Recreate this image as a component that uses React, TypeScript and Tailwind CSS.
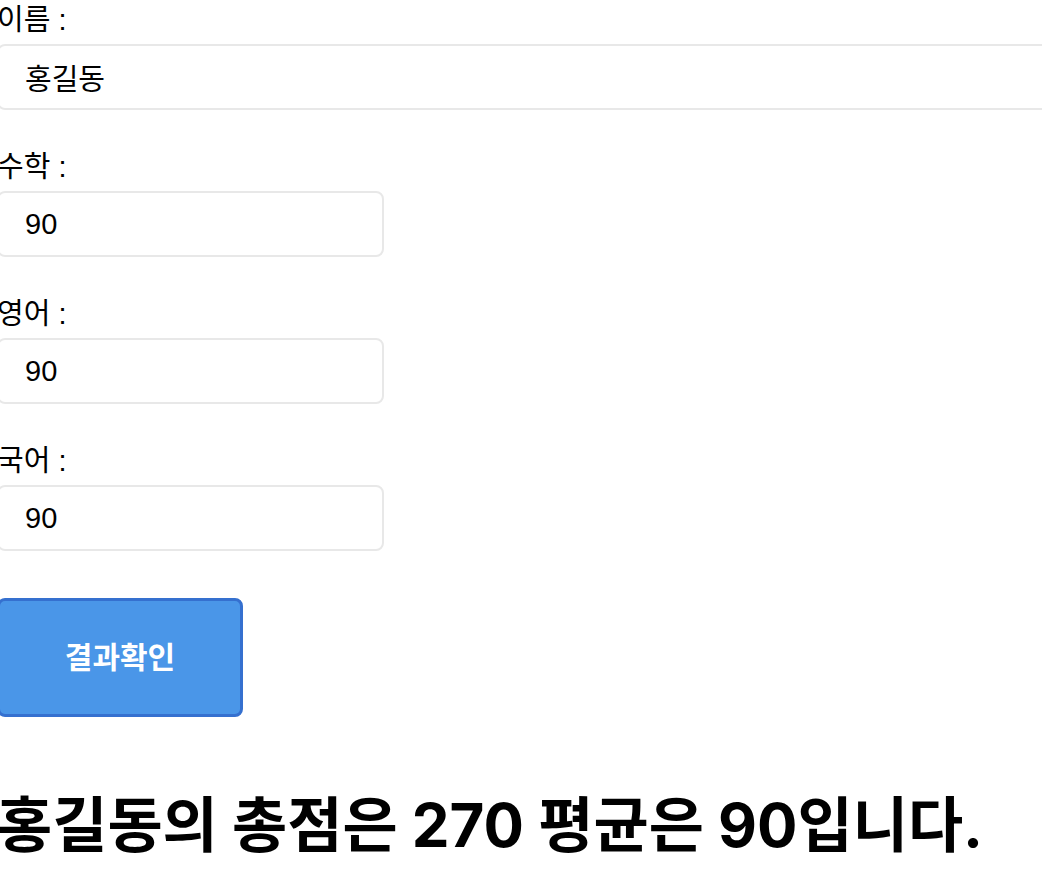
import { useState } from "react";

const font = "font-['Liberation_Sans','Noto_Sans_CJK_KR',sans-serif]";

function App() {
  const [name, setName] = useState("홍길동");
  const [math, setMath] = useState("90");
  const [eng, setEng] = useState("90");
  const [kor, setKor] = useState("90");

  const total = Number(math) + Number(eng) + Number(kor);
  const avg = total / 3;

  const fields = [
    { label: "수학 :", value: math, set: setMath },
    { label: "영어 :", value: eng, set: setEng },
    { label: "국어 :", value: kor, set: setKor },
  ];

  return (
    <div className={`min-h-screen w-full overflow-hidden bg-white text-black ${font}`}>
      <div className="-ml-[3px] flex flex-col">
        <label className="block text-[29px] leading-[40px]">이름 :</label>
        <input
          type="text"
          value={name}
          onChange={(e) => setName(e.target.value)}
          className="mt-1 h-[66px] w-[1100px] rounded-lg border-2 border-[#e8e8e8] px-[26px] text-[29px] outline-none"
        />

        {fields.map((f) => (
          <div key={f.label} className="mt-[37px] flex flex-col">
            <label className="block text-[29px] leading-[40px]">{f.label}</label>
            <input
              type="text"
              value={f.value}
              onChange={(e) => f.set(e.target.value)}
              className="mt-1 h-[66px] w-[387px] rounded-lg border-2 border-[#e8e8e8] px-[26px] text-[29px] outline-none"
            />
          </div>
        ))}

        <button className="mt-[47px] h-[119px] w-[246px] rounded-lg border-[3px] border-[#3570cf] bg-[#4a96e8] text-[30px] font-bold text-white">
          결과확인
        </button>

        <h1 className="mt-[70px] font-['Inter','Noto_Sans_CJK_KR',sans-serif] text-[60px] leading-[77px] font-bold whitespace-nowrap">
          {name}의 총점은 {total} 평균은 {avg}입니다.
        </h1>
      </div>
    </div>
  );
}

export default App;
